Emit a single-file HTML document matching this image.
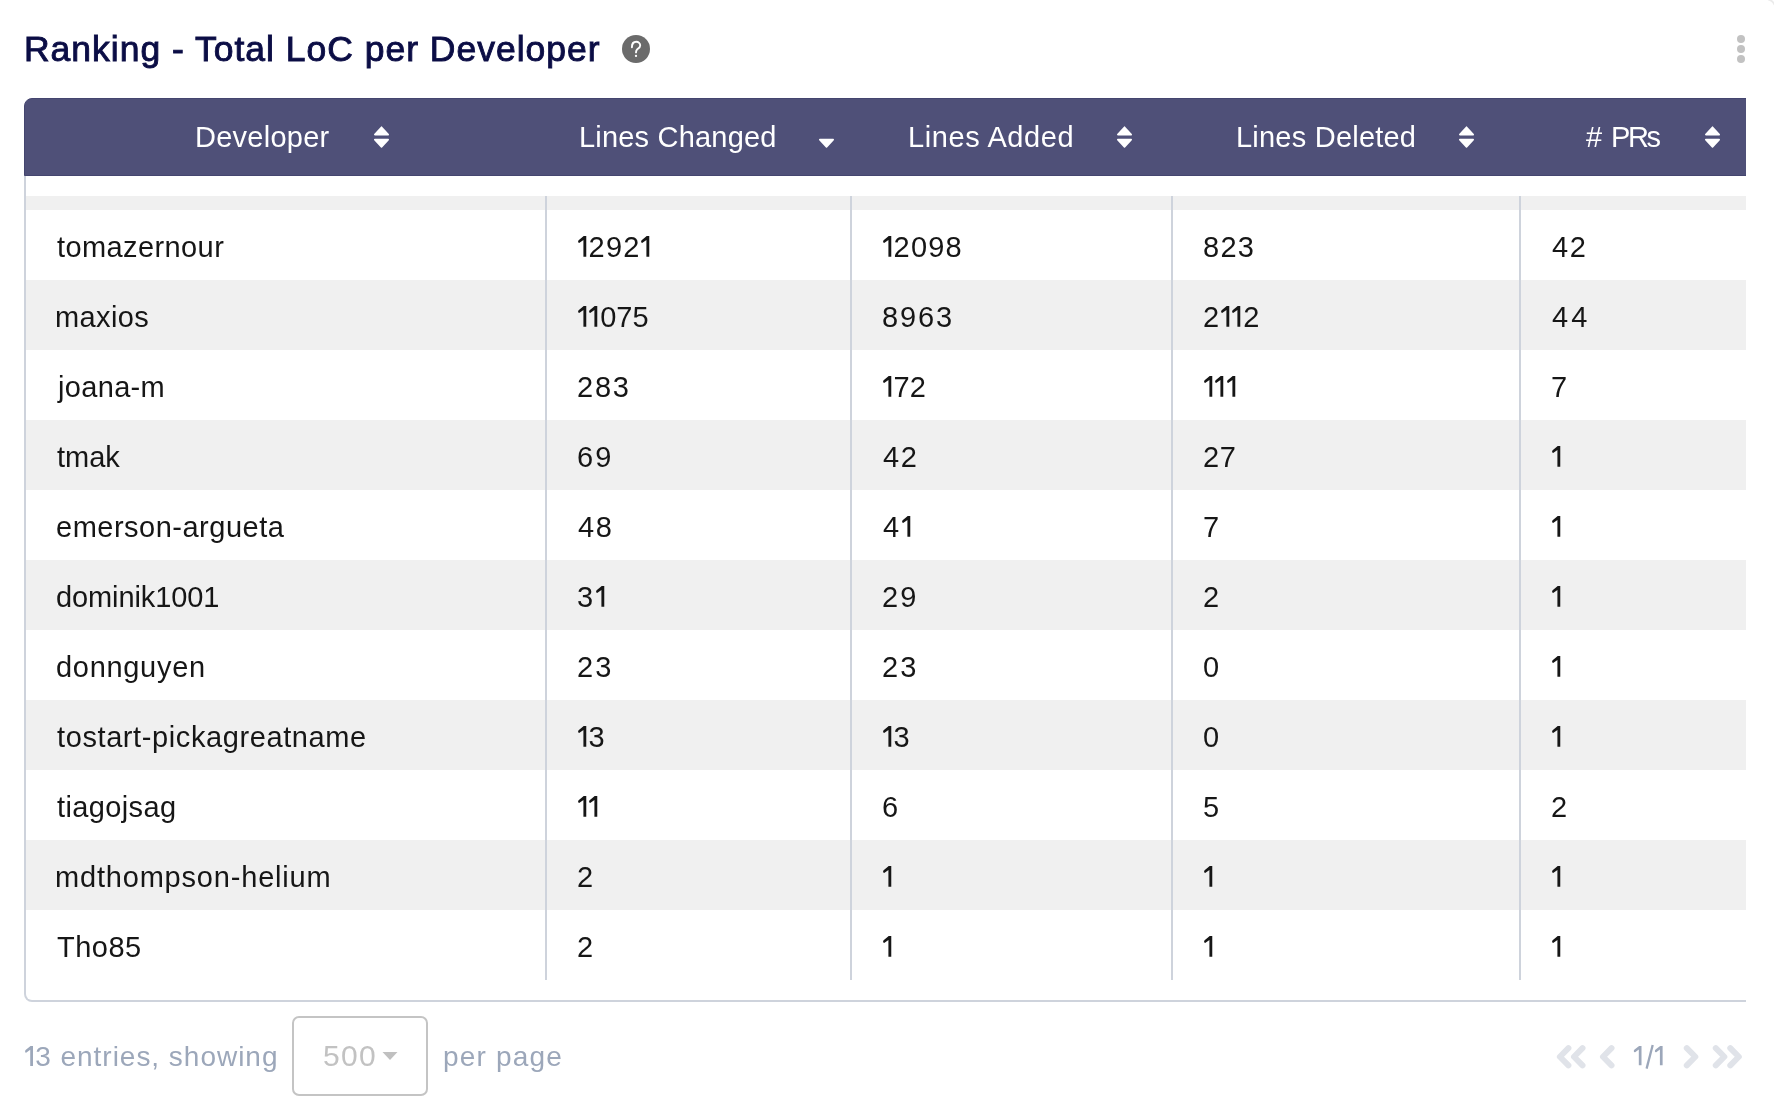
<!DOCTYPE html>
<html><head><meta charset="utf-8"><style>
html,body{margin:0;padding:0;background:#fff;}
body{width:1774px;height:1112px;position:relative;overflow:hidden;font-family:"Liberation Sans",sans-serif;}
.t{position:absolute;white-space:nowrap;will-change:transform;}
.abs{position:absolute;}
.one{display:inline-block;width:0.40em;height:0;position:relative;vertical-align:baseline}
.one svg{position:absolute;left:0.022em;bottom:-0.5px;width:0.317em;height:0.74em}
</style></head><body>

<svg class="abs" style="left:622px;top:35px" width="28" height="28" viewBox="0 0 28 28">
<circle cx="14" cy="14" r="14" fill="#6b6b6b"/>
<path d="M9.9 12.2 C9.9 8.5 12 6.8 14.2 6.8 C16.6 6.8 18.2 8.5 18.2 10.4 C18.2 12.4 16.6 13.2 15.3 14.2 C14.4 14.9 14 15.6 14 17.4" fill="none" stroke="#fff" stroke-width="1.9" stroke-linecap="round"/>
<circle cx="14" cy="20.9" r="1.15" fill="#fff"/>
</svg>
<div class="abs" style="left:1737px;top:35.3px;width:8px;height:8px;border-radius:50%;background:#c2c2c2"></div>
<div class="abs" style="left:1737px;top:44.8px;width:8px;height:8px;border-radius:50%;background:#c2c2c2"></div>
<div class="abs" style="left:1737px;top:54.6px;width:8px;height:8px;border-radius:50%;background:#c2c2c2"></div>
<svg class="abs" style="left:1750px;top:0" width="24" height="24" viewBox="0 0 24 24"><path d="M18 -0.6 A 9 9 0 0 1 24.6 5" fill="none" stroke="#ebebeb" stroke-width="1.8"/></svg>
<div class="abs" style="left:0;top:0;width:1746px;height:1112px;overflow:hidden">
<div class="abs" style="left:24px;top:150px;width:1740px;height:852px;border:2px solid #ced3dc;border-top:none;border-radius:0 0 8px 8px;box-sizing:border-box;background:#fff"></div>
<div class="abs" style="left:26px;top:196px;width:1740px;height:14px;background:#f0f0f0"></div>
<div class="abs" style="left:26px;top:280px;width:1740px;height:70px;background:#f0f0f0"></div>
<div class="abs" style="left:26px;top:420px;width:1740px;height:70px;background:#f0f0f0"></div>
<div class="abs" style="left:26px;top:560px;width:1740px;height:70px;background:#f0f0f0"></div>
<div class="abs" style="left:26px;top:700px;width:1740px;height:70px;background:#f0f0f0"></div>
<div class="abs" style="left:26px;top:840px;width:1740px;height:70px;background:#f0f0f0"></div>
<div class="abs" style="left:545px;top:196px;width:2px;height:784px;background:#ced3dc"></div>
<div class="abs" style="left:850px;top:196px;width:2px;height:784px;background:#ced3dc"></div>
<div class="abs" style="left:1171px;top:196px;width:2px;height:784px;background:#ced3dc"></div>
<div class="abs" style="left:1519px;top:196px;width:2px;height:784px;background:#ced3dc"></div>
<div class="abs" style="left:24px;top:98px;width:1760px;height:78px;background:#4f5078;border-radius:8px 8px 0 0;border:1px solid #44456f;box-sizing:border-box"></div>
</div>
<svg class="abs" style="left:373.0px;top:126px" width="17" height="23" viewBox="0 0 17 23"><path d="M8.5 1.2 L15.2 8.6 L1.8 8.6 Z M1.8 13.6 L15.2 13.6 L8.5 21 Z" fill="#fff" stroke="#fff" stroke-width="1.6" stroke-linejoin="round"/></svg>
<svg class="abs" style="left:1115.5px;top:126px" width="17" height="23" viewBox="0 0 17 23"><path d="M8.5 1.2 L15.2 8.6 L1.8 8.6 Z M1.8 13.6 L15.2 13.6 L8.5 21 Z" fill="#fff" stroke="#fff" stroke-width="1.6" stroke-linejoin="round"/></svg>
<svg class="abs" style="left:1457.8px;top:126px" width="17" height="23" viewBox="0 0 17 23"><path d="M8.5 1.2 L15.2 8.6 L1.8 8.6 Z M1.8 13.6 L15.2 13.6 L8.5 21 Z" fill="#fff" stroke="#fff" stroke-width="1.6" stroke-linejoin="round"/></svg>
<svg class="abs" style="left:1703.6px;top:126px" width="17" height="23" viewBox="0 0 17 23"><path d="M8.5 1.2 L15.2 8.6 L1.8 8.6 Z M1.8 13.6 L15.2 13.6 L8.5 21 Z" fill="#fff" stroke="#fff" stroke-width="1.6" stroke-linejoin="round"/></svg>
<svg class="abs" style="left:817.6px;top:126px" width="17" height="23" viewBox="0 0 17 23"><path d="M1.8 13.6 L15.2 13.6 L8.5 21 Z" fill="#fff" stroke="#fff" stroke-width="1.6" stroke-linejoin="round"/></svg>
<div class="abs" style="left:292px;top:1016px;width:136px;height:80px;border:2px solid #c4c4c4;border-radius:7px;box-sizing:border-box"></div>
<svg class="abs" style="left:382px;top:1051px" width="16" height="10" viewBox="0 0 16 10"><path d="M0.5 1 L15.5 1 L8 9 Z" fill="#c0c0c0"/></svg>
<svg class="abs" style="left:1550px;top:1040px" width="200" height="34" viewBox="0 0 200 34">
<g fill="none" stroke="#e0e3e9" stroke-width="6" stroke-linecap="round" stroke-linejoin="round">
<path d="M18.4 8.2 L9.9 16.75 L18.4 25.3"/><path d="M32.5 8.2 L24 16.75 L32.5 25.3"/>
<path d="M61.5 8.2 L53 16.75 L61.5 25.3"/>
<path d="M136.8 8.2 L145.3 16.75 L136.8 25.3"/>
<path d="M165.8 8.2 L174.3 16.75 L165.8 25.3"/><path d="M180.3 8.2 L188.8 16.75 L180.3 25.3"/>
</g></svg>
<svg class="abs" style="left:1630px;top:1040px" width="40" height="34" viewBox="0 0 40 34"><path transform="translate(3.7 5.8) scale(0.964)" d="M8.1 0.1 L8.1 20.3 L5.3 20.3 L5.3 3.9 L1.5 6.7 Q0.3 7.1 0.1 5.7 Q0 4.6 0.9 3.9 L5.6 0.1 Z" fill="#9ca7ba"/><path transform="translate(24.8 5.8) scale(0.964)" d="M8.1 0.1 L8.1 20.3 L5.3 20.3 L5.3 3.9 L1.5 6.7 Q0.3 7.1 0.1 5.7 Q0 4.6 0.9 3.9 L5.6 0.1 Z" fill="#9ca7ba"/><line x1="16.6" y1="28.6" x2="22.7" y2="5" stroke="#9ca7ba" stroke-width="2.3"/></svg>
<div class="t" id="title" style="left:24.40px;top:32.00px;font-size:35.5px;line-height:35.5px;color:#0b0d45;font-weight:normal;letter-spacing:0.988px;-webkit-text-stroke:0.9px #0b0d45;">Ranking - Total LoC per Developer</div>
<div class="t" id="c0_0" style="left:57.00px;top:233.00px;font-size:29.0px;line-height:29.0px;color:#161616;font-weight:normal;letter-spacing:0.400px;">tomazernour</div>
<div class="t" id="c0_1" style="left:577.00px;top:233.00px;font-size:29.0px;line-height:29.0px;color:#161616"><span class="one"><svg viewBox="0 0 9 21"><path d="M8.1 0.1 L8.1 20.3 L5.3 20.3 L5.3 3.9 L1.5 6.7 Q0.3 7.1 0.1 5.7 Q0 4.6 0.9 3.9 L5.6 0.1 Z" fill="#161616"/></svg></span><span style="letter-spacing:1.169px">2</span><span style="letter-spacing:1.169px">9</span><span style="letter-spacing:1.169px">2</span><span class="one"><svg viewBox="0 0 9 21"><path d="M8.1 0.1 L8.1 20.3 L5.3 20.3 L5.3 3.9 L1.5 6.7 Q0.3 7.1 0.1 5.7 Q0 4.6 0.9 3.9 L5.6 0.1 Z" fill="#161616"/></svg></span></div>
<div class="t" id="c0_2" style="left:882.40px;top:233.00px;font-size:29.0px;line-height:29.0px;color:#161616"><span class="one"><svg viewBox="0 0 9 21"><path d="M8.1 0.1 L8.1 20.3 L5.3 20.3 L5.3 3.9 L1.5 6.7 Q0.3 7.1 0.1 5.7 Q0 4.6 0.9 3.9 L5.6 0.1 Z" fill="#161616"/></svg></span><span style="letter-spacing:1.167px">2</span><span style="letter-spacing:1.167px">0</span><span style="letter-spacing:1.167px">9</span><span style="letter-spacing:1.167px">8</span></div>
<div class="t" id="c0_3" style="left:1203.20px;top:233.00px;font-size:29.0px;line-height:29.0px;color:#161616"><span style="letter-spacing:1.250px">8</span><span style="letter-spacing:1.250px">2</span><span style="letter-spacing:1.250px">3</span></div>
<div class="t" id="c0_4" style="left:1551.60px;top:233.00px;font-size:29.0px;line-height:29.0px;color:#161616"><span style="letter-spacing:1.500px">4</span><span style="letter-spacing:1.500px">2</span></div>
<div class="t" id="c1_0" style="left:55.00px;top:303.00px;font-size:29.0px;line-height:29.0px;color:#161616;font-weight:normal;letter-spacing:0.400px;">maxios</div>
<div class="t" id="c1_1" style="left:577.00px;top:303.00px;font-size:29.0px;line-height:29.0px;color:#161616"><span class="one"><svg viewBox="0 0 9 21"><path d="M8.1 0.1 L8.1 20.3 L5.3 20.3 L5.3 3.9 L1.5 6.7 Q0.3 7.1 0.1 5.7 Q0 4.6 0.9 3.9 L5.6 0.1 Z" fill="#161616"/></svg></span><span class="one"><svg viewBox="0 0 9 21"><path d="M8.1 0.1 L8.1 20.3 L5.3 20.3 L5.3 3.9 L1.5 6.7 Q0.3 7.1 0.1 5.7 Q0 4.6 0.9 3.9 L5.6 0.1 Z" fill="#161616"/></svg></span><span style="letter-spacing:0.000px">0</span><span style="letter-spacing:0.000px">7</span><span style="letter-spacing:0.000px">5</span></div>
<div class="t" id="c1_2" style="left:882.40px;top:303.00px;font-size:29.0px;line-height:29.0px;color:#161616"><span style="letter-spacing:1.831px">8</span><span style="letter-spacing:1.831px">9</span><span style="letter-spacing:1.831px">6</span><span style="letter-spacing:1.831px">3</span></div>
<div class="t" id="c1_3" style="left:1203.20px;top:303.00px;font-size:29.0px;line-height:29.0px;color:#161616"><span style="letter-spacing:1.000px">2</span><span class="one"><svg viewBox="0 0 9 21"><path d="M8.1 0.1 L8.1 20.3 L5.3 20.3 L5.3 3.9 L1.5 6.7 Q0.3 7.1 0.1 5.7 Q0 4.6 0.9 3.9 L5.6 0.1 Z" fill="#161616"/></svg></span><span class="one"><svg viewBox="0 0 9 21"><path d="M8.1 0.1 L8.1 20.3 L5.3 20.3 L5.3 3.9 L1.5 6.7 Q0.3 7.1 0.1 5.7 Q0 4.6 0.9 3.9 L5.6 0.1 Z" fill="#161616"/></svg></span><span style="letter-spacing:1.000px">2</span></div>
<div class="t" id="c1_4" style="left:1551.60px;top:303.00px;font-size:29.0px;line-height:29.0px;color:#161616"><span style="letter-spacing:3.000px">4</span><span style="letter-spacing:3.000px">4</span></div>
<div class="t" id="c2_0" style="left:58.00px;top:373.00px;font-size:29.0px;line-height:29.0px;color:#161616;font-weight:normal;letter-spacing:0.331px;">joana-m</div>
<div class="t" id="c2_1" style="left:577.00px;top:373.00px;font-size:29.0px;line-height:29.0px;color:#161616"><span style="letter-spacing:1.750px">2</span><span style="letter-spacing:1.750px">8</span><span style="letter-spacing:1.750px">3</span></div>
<div class="t" id="c2_2" style="left:882.40px;top:373.00px;font-size:29.0px;line-height:29.0px;color:#161616"><span class="one"><svg viewBox="0 0 9 21"><path d="M8.1 0.1 L8.1 20.3 L5.3 20.3 L5.3 3.9 L1.5 6.7 Q0.3 7.1 0.1 5.7 Q0 4.6 0.9 3.9 L5.6 0.1 Z" fill="#161616"/></svg></span><span style="letter-spacing:-0.000px">7</span><span style="letter-spacing:-0.000px">2</span></div>
<div class="t" id="c2_3" style="left:1203.20px;top:373.00px;font-size:29.0px;line-height:29.0px;color:#161616"><span class="one"><svg viewBox="0 0 9 21"><path d="M8.1 0.1 L8.1 20.3 L5.3 20.3 L5.3 3.9 L1.5 6.7 Q0.3 7.1 0.1 5.7 Q0 4.6 0.9 3.9 L5.6 0.1 Z" fill="#161616"/></svg></span><span class="one"><svg viewBox="0 0 9 21"><path d="M8.1 0.1 L8.1 20.3 L5.3 20.3 L5.3 3.9 L1.5 6.7 Q0.3 7.1 0.1 5.7 Q0 4.6 0.9 3.9 L5.6 0.1 Z" fill="#161616"/></svg></span><span class="one"><svg viewBox="0 0 9 21"><path d="M8.1 0.1 L8.1 20.3 L5.3 20.3 L5.3 3.9 L1.5 6.7 Q0.3 7.1 0.1 5.7 Q0 4.6 0.9 3.9 L5.6 0.1 Z" fill="#161616"/></svg></span></div>
<div class="t" id="c2_4" style="left:1550.60px;top:373.00px;font-size:29.0px;line-height:29.0px;color:#161616"><span style="letter-spacing:0.000px">7</span></div>
<div class="t" id="c3_0" style="left:57.00px;top:443.00px;font-size:29.0px;line-height:29.0px;color:#161616;font-weight:normal;letter-spacing:0.001px;">tmak</div>
<div class="t" id="c3_1" style="left:577.00px;top:443.00px;font-size:29.0px;line-height:29.0px;color:#161616"><span style="letter-spacing:2.000px">6</span><span style="letter-spacing:2.000px">9</span></div>
<div class="t" id="c3_2" style="left:883.40px;top:443.00px;font-size:29.0px;line-height:29.0px;color:#161616"><span style="letter-spacing:1.500px">4</span><span style="letter-spacing:1.500px">2</span></div>
<div class="t" id="c3_3" style="left:1203.20px;top:443.00px;font-size:29.0px;line-height:29.0px;color:#161616"><span style="letter-spacing:0.500px">2</span><span style="letter-spacing:0.500px">7</span></div>
<div class="t" id="c3_4" style="left:1550.60px;top:443.00px;font-size:29.0px;line-height:29.0px;color:#161616"><span class="one"><svg viewBox="0 0 9 21"><path d="M8.1 0.1 L8.1 20.3 L5.3 20.3 L5.3 3.9 L1.5 6.7 Q0.3 7.1 0.1 5.7 Q0 4.6 0.9 3.9 L5.6 0.1 Z" fill="#161616"/></svg></span></div>
<div class="t" id="c4_0" style="left:56.00px;top:513.00px;font-size:29.0px;line-height:29.0px;color:#161616;font-weight:normal;letter-spacing:0.500px;">emerson-argueta</div>
<div class="t" id="c4_1" style="left:578.00px;top:513.00px;font-size:29.0px;line-height:29.0px;color:#161616"><span style="letter-spacing:1.500px">4</span><span style="letter-spacing:1.500px">8</span></div>
<div class="t" id="c4_2" style="left:883.40px;top:513.00px;font-size:29.0px;line-height:29.0px;color:#161616"><span style="letter-spacing:2.500px">4</span><span class="one"><svg viewBox="0 0 9 21"><path d="M8.1 0.1 L8.1 20.3 L5.3 20.3 L5.3 3.9 L1.5 6.7 Q0.3 7.1 0.1 5.7 Q0 4.6 0.9 3.9 L5.6 0.1 Z" fill="#161616"/></svg></span></div>
<div class="t" id="c4_3" style="left:1203.20px;top:513.00px;font-size:29.0px;line-height:29.0px;color:#161616"><span style="letter-spacing:0.000px">7</span></div>
<div class="t" id="c4_4" style="left:1550.60px;top:513.00px;font-size:29.0px;line-height:29.0px;color:#161616"><span class="one"><svg viewBox="0 0 9 21"><path d="M8.1 0.1 L8.1 20.3 L5.3 20.3 L5.3 3.9 L1.5 6.7 Q0.3 7.1 0.1 5.7 Q0 4.6 0.9 3.9 L5.6 0.1 Z" fill="#161616"/></svg></span></div>
<div class="t" id="c5_0" style="left:56.00px;top:583.00px;font-size:29.0px;line-height:29.0px;color:#161616;font-weight:normal;letter-spacing:-0.100px;">dominik1001</div>
<div class="t" id="c5_1" style="left:577.00px;top:583.00px;font-size:29.0px;line-height:29.0px;color:#161616"><span style="letter-spacing:2.500px">3</span><span class="one"><svg viewBox="0 0 9 21"><path d="M8.1 0.1 L8.1 20.3 L5.3 20.3 L5.3 3.9 L1.5 6.7 Q0.3 7.1 0.1 5.7 Q0 4.6 0.9 3.9 L5.6 0.1 Z" fill="#161616"/></svg></span></div>
<div class="t" id="c5_2" style="left:882.40px;top:583.00px;font-size:29.0px;line-height:29.0px;color:#161616"><span style="letter-spacing:2.000px">2</span><span style="letter-spacing:2.000px">9</span></div>
<div class="t" id="c5_3" style="left:1203.20px;top:583.00px;font-size:29.0px;line-height:29.0px;color:#161616"><span style="letter-spacing:0.000px">2</span></div>
<div class="t" id="c5_4" style="left:1550.60px;top:583.00px;font-size:29.0px;line-height:29.0px;color:#161616"><span class="one"><svg viewBox="0 0 9 21"><path d="M8.1 0.1 L8.1 20.3 L5.3 20.3 L5.3 3.9 L1.5 6.7 Q0.3 7.1 0.1 5.7 Q0 4.6 0.9 3.9 L5.6 0.1 Z" fill="#161616"/></svg></span></div>
<div class="t" id="c6_0" style="left:56.00px;top:653.00px;font-size:29.0px;line-height:29.0px;color:#161616;font-weight:normal;letter-spacing:0.695px;">donnguyen</div>
<div class="t" id="c6_1" style="left:577.00px;top:653.00px;font-size:29.0px;line-height:29.0px;color:#161616"><span style="letter-spacing:2.000px">2</span><span style="letter-spacing:2.000px">3</span></div>
<div class="t" id="c6_2" style="left:882.40px;top:653.00px;font-size:29.0px;line-height:29.0px;color:#161616"><span style="letter-spacing:2.000px">2</span><span style="letter-spacing:2.000px">3</span></div>
<div class="t" id="c6_3" style="left:1203.20px;top:653.00px;font-size:29.0px;line-height:29.0px;color:#161616"><span style="letter-spacing:0.000px">0</span></div>
<div class="t" id="c6_4" style="left:1550.60px;top:653.00px;font-size:29.0px;line-height:29.0px;color:#161616"><span class="one"><svg viewBox="0 0 9 21"><path d="M8.1 0.1 L8.1 20.3 L5.3 20.3 L5.3 3.9 L1.5 6.7 Q0.3 7.1 0.1 5.7 Q0 4.6 0.9 3.9 L5.6 0.1 Z" fill="#161616"/></svg></span></div>
<div class="t" id="c7_0" style="left:57.00px;top:723.00px;font-size:29.0px;line-height:29.0px;color:#161616;font-weight:normal;letter-spacing:0.598px;">tostart-pickagreatname</div>
<div class="t" id="c7_1" style="left:577.00px;top:723.00px;font-size:29.0px;line-height:29.0px;color:#161616"><span class="one"><svg viewBox="0 0 9 21"><path d="M8.1 0.1 L8.1 20.3 L5.3 20.3 L5.3 3.9 L1.5 6.7 Q0.3 7.1 0.1 5.7 Q0 4.6 0.9 3.9 L5.6 0.1 Z" fill="#161616"/></svg></span><span style="letter-spacing:0.500px">3</span></div>
<div class="t" id="c7_2" style="left:882.40px;top:723.00px;font-size:29.0px;line-height:29.0px;color:#161616"><span class="one"><svg viewBox="0 0 9 21"><path d="M8.1 0.1 L8.1 20.3 L5.3 20.3 L5.3 3.9 L1.5 6.7 Q0.3 7.1 0.1 5.7 Q0 4.6 0.9 3.9 L5.6 0.1 Z" fill="#161616"/></svg></span><span style="letter-spacing:0.500px">3</span></div>
<div class="t" id="c7_3" style="left:1203.20px;top:723.00px;font-size:29.0px;line-height:29.0px;color:#161616"><span style="letter-spacing:0.000px">0</span></div>
<div class="t" id="c7_4" style="left:1550.60px;top:723.00px;font-size:29.0px;line-height:29.0px;color:#161616"><span class="one"><svg viewBox="0 0 9 21"><path d="M8.1 0.1 L8.1 20.3 L5.3 20.3 L5.3 3.9 L1.5 6.7 Q0.3 7.1 0.1 5.7 Q0 4.6 0.9 3.9 L5.6 0.1 Z" fill="#161616"/></svg></span></div>
<div class="t" id="c8_0" style="left:57.00px;top:793.00px;font-size:29.0px;line-height:29.0px;color:#161616;font-weight:normal;letter-spacing:0.375px;">tiagojsag</div>
<div class="t" id="c8_1" style="left:577.00px;top:793.00px;font-size:29.0px;line-height:29.0px;color:#161616"><span class="one"><svg viewBox="0 0 9 21"><path d="M8.1 0.1 L8.1 20.3 L5.3 20.3 L5.3 3.9 L1.5 6.7 Q0.3 7.1 0.1 5.7 Q0 4.6 0.9 3.9 L5.6 0.1 Z" fill="#161616"/></svg></span><span class="one"><svg viewBox="0 0 9 21"><path d="M8.1 0.1 L8.1 20.3 L5.3 20.3 L5.3 3.9 L1.5 6.7 Q0.3 7.1 0.1 5.7 Q0 4.6 0.9 3.9 L5.6 0.1 Z" fill="#161616"/></svg></span></div>
<div class="t" id="c8_2" style="left:882.40px;top:793.00px;font-size:29.0px;line-height:29.0px;color:#161616"><span style="letter-spacing:0.000px">6</span></div>
<div class="t" id="c8_3" style="left:1203.20px;top:793.00px;font-size:29.0px;line-height:29.0px;color:#161616"><span style="letter-spacing:0.000px">5</span></div>
<div class="t" id="c8_4" style="left:1550.60px;top:793.00px;font-size:29.0px;line-height:29.0px;color:#161616"><span style="letter-spacing:0.000px">2</span></div>
<div class="t" id="c9_0" style="left:55.00px;top:863.00px;font-size:29.0px;line-height:29.0px;color:#161616;font-weight:normal;letter-spacing:0.809px;">mdthompson-helium</div>
<div class="t" id="c9_1" style="left:577.00px;top:863.00px;font-size:29.0px;line-height:29.0px;color:#161616"><span style="letter-spacing:0.000px">2</span></div>
<div class="t" id="c9_2" style="left:882.40px;top:863.00px;font-size:29.0px;line-height:29.0px;color:#161616"><span class="one"><svg viewBox="0 0 9 21"><path d="M8.1 0.1 L8.1 20.3 L5.3 20.3 L5.3 3.9 L1.5 6.7 Q0.3 7.1 0.1 5.7 Q0 4.6 0.9 3.9 L5.6 0.1 Z" fill="#161616"/></svg></span></div>
<div class="t" id="c9_3" style="left:1203.20px;top:863.00px;font-size:29.0px;line-height:29.0px;color:#161616"><span class="one"><svg viewBox="0 0 9 21"><path d="M8.1 0.1 L8.1 20.3 L5.3 20.3 L5.3 3.9 L1.5 6.7 Q0.3 7.1 0.1 5.7 Q0 4.6 0.9 3.9 L5.6 0.1 Z" fill="#161616"/></svg></span></div>
<div class="t" id="c9_4" style="left:1550.60px;top:863.00px;font-size:29.0px;line-height:29.0px;color:#161616"><span class="one"><svg viewBox="0 0 9 21"><path d="M8.1 0.1 L8.1 20.3 L5.3 20.3 L5.3 3.9 L1.5 6.7 Q0.3 7.1 0.1 5.7 Q0 4.6 0.9 3.9 L5.6 0.1 Z" fill="#161616"/></svg></span></div>
<div class="t" id="c10_0" style="left:57.00px;top:933.00px;font-size:29.0px;line-height:29.0px;color:#161616;font-weight:normal;letter-spacing:0.500px;">Tho85</div>
<div class="t" id="c10_1" style="left:577.00px;top:933.00px;font-size:29.0px;line-height:29.0px;color:#161616"><span style="letter-spacing:0.000px">2</span></div>
<div class="t" id="c10_2" style="left:882.40px;top:933.00px;font-size:29.0px;line-height:29.0px;color:#161616"><span class="one"><svg viewBox="0 0 9 21"><path d="M8.1 0.1 L8.1 20.3 L5.3 20.3 L5.3 3.9 L1.5 6.7 Q0.3 7.1 0.1 5.7 Q0 4.6 0.9 3.9 L5.6 0.1 Z" fill="#161616"/></svg></span></div>
<div class="t" id="c10_3" style="left:1203.20px;top:933.00px;font-size:29.0px;line-height:29.0px;color:#161616"><span class="one"><svg viewBox="0 0 9 21"><path d="M8.1 0.1 L8.1 20.3 L5.3 20.3 L5.3 3.9 L1.5 6.7 Q0.3 7.1 0.1 5.7 Q0 4.6 0.9 3.9 L5.6 0.1 Z" fill="#161616"/></svg></span></div>
<div class="t" id="c10_4" style="left:1550.60px;top:933.00px;font-size:29.0px;line-height:29.0px;color:#161616"><span class="one"><svg viewBox="0 0 9 21"><path d="M8.1 0.1 L8.1 20.3 L5.3 20.3 L5.3 3.9 L1.5 6.7 Q0.3 7.1 0.1 5.7 Q0 4.6 0.9 3.9 L5.6 0.1 Z" fill="#161616"/></svg></span></div>
<div class="t" id="h0" style="left:195.40px;top:123.00px;font-size:29.0px;line-height:29.0px;color:#ffffff;font-weight:normal;letter-spacing:0.250px;">Developer</div>
<div class="t" id="h1" style="left:578.60px;top:123.00px;font-size:29.0px;line-height:29.0px;color:#ffffff;font-weight:normal;letter-spacing:0.196px;">Lines Changed</div>
<div class="t" id="h2" style="left:908.00px;top:123.00px;font-size:29.0px;line-height:29.0px;color:#ffffff;font-weight:normal;letter-spacing:0.600px;">Lines Added</div>
<div class="t" id="h3" style="left:1236.40px;top:123.00px;font-size:29.0px;line-height:29.0px;color:#ffffff;font-weight:normal;letter-spacing:0.221px;">Lines Deleted</div>
<div class="t" id="h4" style="left:1611.40px;top:123.00px;font-size:29.0px;line-height:29.0px;color:#ffffff;font-weight:normal;letter-spacing:-2.400px;">PRs</div>
<div class="t" id="h5" style="left:1586.20px;top:123.00px;font-size:29.0px;line-height:29.0px;color:#ffffff;font-weight:normal;letter-spacing:0.000px;">#</div>
<div class="t" id="f0" style="left:24.00px;top:1043.00px;font-size:28px;line-height:28px;color:#9ca7ba"><span class="one"><svg viewBox="0 0 9 21"><path d="M8.1 0.1 L8.1 20.3 L5.3 20.3 L5.3 3.9 L1.5 6.7 Q0.3 7.1 0.1 5.7 Q0 4.6 0.9 3.9 L5.6 0.1 Z" fill="#9ca7ba"/></svg></span><span style="letter-spacing:0.970px">3</span><span style="letter-spacing:0.970px"> </span><span style="letter-spacing:0.970px">e</span><span style="letter-spacing:0.970px">n</span><span style="letter-spacing:0.970px">t</span><span style="letter-spacing:0.970px">r</span><span style="letter-spacing:0.970px">i</span><span style="letter-spacing:0.970px">e</span><span style="letter-spacing:0.970px">s</span><span style="letter-spacing:0.970px">,</span><span style="letter-spacing:0.970px"> </span><span style="letter-spacing:0.970px">s</span><span style="letter-spacing:0.970px">h</span><span style="letter-spacing:0.970px">o</span><span style="letter-spacing:0.970px">w</span><span style="letter-spacing:0.970px">i</span><span style="letter-spacing:0.970px">n</span><span style="letter-spacing:0.970px">g</span></div>
<div class="t" id="f1" style="left:322.80px;top:1040.50px;font-size:30px;line-height:30px;color:#c2c2c2;font-weight:normal;letter-spacing:1.300px;">500</div>
<div class="t" id="f2" style="left:442.80px;top:1043.00px;font-size:28px;line-height:28px;color:#9ca7ba;font-weight:normal;letter-spacing:1.169px;">per page</div>
</body></html>
